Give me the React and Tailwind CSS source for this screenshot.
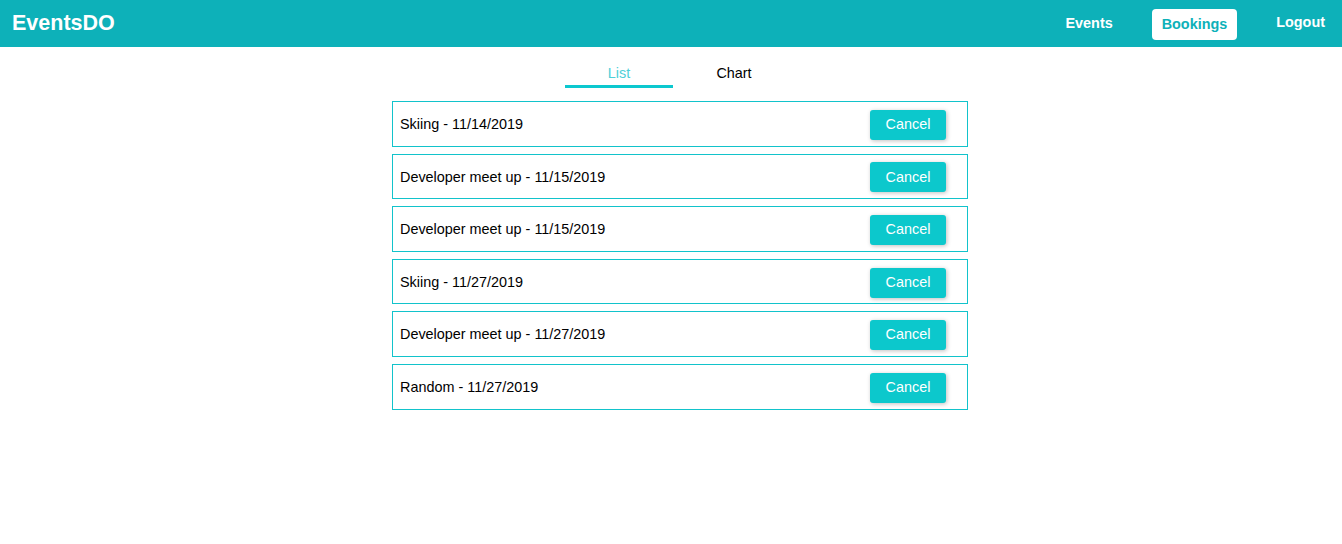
import { useState } from "react";

const bookings = [
  { id: 1, title: "Skiing", date: "11/14/2019" },
  { id: 2, title: "Developer meet up", date: "11/15/2019" },
  { id: 3, title: "Developer meet up", date: "11/15/2019" },
  { id: 4, title: "Skiing", date: "11/27/2019" },
  { id: 5, title: "Developer meet up", date: "11/27/2019" },
  { id: 6, title: "Random", date: "11/27/2019" },
];

export default function App() {
  const [tab, setTab] = useState("list");

  return (
    <div className="min-h-screen bg-white font-['Liberation_Sans',Arial,sans-serif] text-black">
      <header className="flex h-[47px] items-center justify-between bg-[#0db1b9] pl-[12px] pr-[7px]">
        <h1 className="text-[21.5px] font-bold leading-none text-white">EventsDO</h1>
        <nav className="flex items-center gap-[29px]">
          <a className="px-[10px] py-[7px] text-[14.4px] font-bold leading-[17px] text-white">
            Events
          </a>
          <a className="mt-[2px] rounded-[4px] bg-white px-[10px] py-[7px] text-[14.4px] font-bold leading-[17px] text-[#0db1b9]">
            Bookings
          </a>
          <button className="-mt-[2px] px-[10px] py-[7px] text-[14.4px] font-bold leading-[17px] text-white">
            Logout
          </button>
        </nav>
      </header>

      <main>
        <div className="flex justify-center pl-[11px] pt-[18px]">
          <button
            onClick={() => setTab("list")}
            className={
              "w-[108px] border-b-[3px] pb-[3px] text-[14.4px] leading-[17px] " +
              (tab === "list"
                ? "border-[#0cc8cf] text-[#4fcfd8]"
                : "border-transparent text-black")
            }
          >
            List
          </button>
          <button
            onClick={() => setTab("chart")}
            className={
              "ml-[7px] w-[108px] border-b-[3px] pb-[3px] text-[14.4px] leading-[17px] " +
              (tab === "chart"
                ? "border-[#0cc8cf] text-[#4fcfd8]"
                : "border-transparent text-black")
            }
          >
            Chart
          </button>
        </div>

        <div className="flex justify-center pl-[18px] pt-[13px]">
          <ul className="flex w-[576px] flex-col gap-[7px]">
            {bookings.map((b) => (
              <li
                key={b.id}
                className="flex h-[45.6px] items-center justify-between border border-[#12c3cb] pl-[7px] pr-[21px] pt-[2px]"
              >
                <span className="text-[14.4px]">
                  {b.title} - {b.date}
                </span>
                <button className="h-[30px] w-[76px] rounded-[3px] bg-[#0cc8cc] text-[14.4px] text-white shadow-[1px_1px_4px_rgba(0,0,0,0.25)]">
                  Cancel
                </button>
              </li>
            ))}
          </ul>
        </div>
      </main>
    </div>
  );
}
